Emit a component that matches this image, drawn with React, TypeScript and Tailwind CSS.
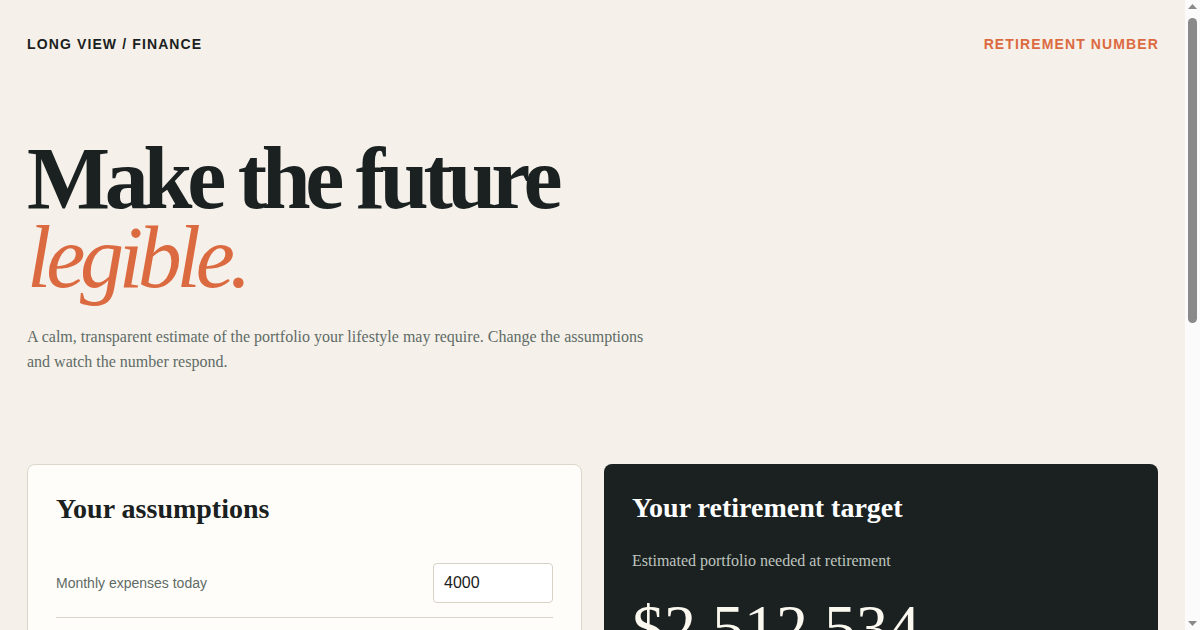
import { useState } from "react";

const serif = "font-['Liberation_Serif','Times_New_Roman',serif]";
const sans = "font-['Liberation_Sans',Arial,sans-serif]";

interface Field {
  key: string;
  label: string;
  value: number;
}

const initialFields: Field[] = [
  { key: "expenses", label: "Monthly expenses today", value: 4000 },
  { key: "years", label: "Years until retirement", value: 25 },
  { key: "inflation", label: "Expected inflation (%)", value: 3 },
  { key: "withdrawal", label: "Safe withdrawal rate (%)", value: 4 },
];

// classic scrollbar look from the screenshot, drawn over the right edge
const FakeScrollbar = () => (
  <div className="fixed top-0 right-0 flex h-screen w-[15px] flex-col items-center bg-[#fbfbfb]">
    <svg width="9" height="5" viewBox="0 0 9 5" className="mt-[4px]">
      <path d="M0 5 L4.5 0 L9 5 Z" fill="#8a8a8a" />
    </svg>
    <div className="mt-[9px] h-[305px] w-[9px] rounded-full bg-[#8a8a8a]" />
    <svg width="9" height="5" viewBox="0 0 9 5" className="mt-auto mb-[4px]">
      <path d="M0 0 L9 0 L4.5 5 Z" fill="#8a8a8a" />
    </svg>
  </div>
);

const App: React.FC = () => {
  const [fields, setFields] = useState<Field[]>(initialFields);

  const get = (k: string) => fields.find((f) => f.key === k)?.value ?? 0;
  const futureAnnual = get("expenses") * 12 * Math.pow(1 + get("inflation") / 100, get("years"));
  const target = Math.round(futureAnnual / (get("withdrawal") / 100));

  const update = (key: string, value: string) => {
    setFields((prev) => prev.map((f) => (f.key === key ? { ...f, value: Number(value) } : f)));
  };

  return (
    <div className={`min-h-screen bg-[#f5f1ea] pr-[15px] text-[#1a2120] ${sans}`}>
      <div className="px-[27px] pb-24">
        {/* header */}
        <header className="flex items-center justify-between pt-[34px] text-[14px] font-bold uppercase leading-5 tracking-[0.08em]">
          <span className="text-[#1a2120]">Long View / Finance</span>
          <span className="-mr-px text-[#dc6a40]">Retirement Number</span>
        </header>

        {/* hero */}
        <section className="mt-[85px]">
          <h1 className={`${serif} text-[88px] leading-[0.9] tracking-[-0.06em]`}>
            <span className="block font-bold text-[#1a2120]">Make the future</span>
            <span className="block font-normal italic text-[#dc6a40]">legible.</span>
          </h1>
          <p className={`${serif} mt-[27px] max-w-[630px] text-[16px] leading-[25px] text-[#5f6b66]`}>
            A calm, transparent estimate of the portfolio your lifestyle may require. Change the assumptions
            and watch the number respond.
          </p>
        </section>

        {/* cards */}
        <section className="mt-[90px] grid grid-cols-[555fr_554fr] gap-[22px]">
          <div className="rounded-lg border border-[#ddd7cb] bg-[#fefdf9] px-[28px] pt-[28px] pb-8">
            <h2 className={`${serif} text-[28px] font-bold leading-8 text-[#1a2120]`}>
              Your assumptions
            </h2>
            <div className="mt-[24px]">
              {fields.map((f) => (
                <div
                  key={f.key}
                  className="flex items-center justify-between border-b border-[#d8d3c8] py-[14px]"
                >
                  <label className="text-[14px] text-[#5f6b66]">{f.label}</label>
                  <input
                    type="number"
                    value={f.value}
                    onChange={(e) => update(f.key, e.target.value)}
                    className="h-10 w-[120px] rounded border border-[#d8d2c4] bg-white px-[10px] text-[16px] text-[#1a2120] outline-none [appearance:textfield] [&::-webkit-inner-spin-button]:appearance-none"
                  />
                </div>
              ))}
            </div>
          </div>

          <div className="rounded-lg bg-[#1a2120] px-[28px] pt-[28px] pb-8 text-[#fbf8f0]">
            <h2 className={`${serif} text-[28px] font-bold leading-8 text-white`}>
              Your retirement target
            </h2>
            <p className={`${serif} mt-[25px] text-[16px] leading-6 text-[#bfc4bf]`}>
              Estimated portfolio needed at retirement
            </p>
            <div className={`${serif} mt-[23px] text-[64px] font-normal leading-none text-[#fbf8f0]`}>
              ${target.toLocaleString("en-US")}
            </div>
            <div className="mt-8 space-y-3 border-t border-[#34403c] pt-6 text-[14px] text-[#bfc4bf]">
              <div className="flex justify-between">
                <span>Annual spending at retirement</span>
                <span className="text-[#fbf8f0]">${Math.round(futureAnnual).toLocaleString("en-US")}</span>
              </div>
              <div className="flex justify-between">
                <span>Withdrawal rate</span>
                <span className="text-[#fbf8f0]">{get("withdrawal")}%</span>
              </div>
            </div>
          </div>
        </section>

        <p className={`${serif} mt-16 max-w-[630px] text-[14px] leading-6 text-[#5f6b66]`}>
          This estimate is illustrative and not financial advice. Real returns, taxes and fees will vary.
        </p>
        <div className="h-[200px]" />
      </div>
      <FakeScrollbar />
    </div>
  );
};

export default App;
